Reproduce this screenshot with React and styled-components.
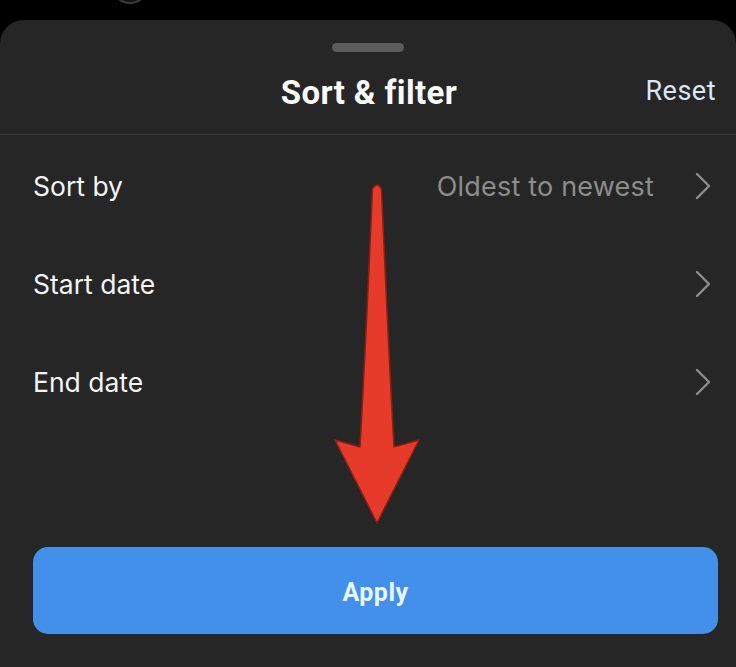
import React from "react";
import styled, { createGlobalStyle } from "styled-components";

const Global = createGlobalStyle`
  html, body { margin: 0; padding: 0; background: #000; }
  body { font-family: Inter, "Noto Sans", "Liberation Sans", sans-serif; -webkit-font-smoothing: antialiased; }
  * { box-sizing: border-box; }
`;

const Page = styled.div`
  width: 736px;
  height: 667px;
  background: #000;
  display: flex;
  flex-direction: column;
  overflow: hidden;
`;

const TopStrip = styled.div`
  height: 20px;
  flex: none;
  position: relative;
`;

const Dot = styled.div`
  position: absolute;
  left: 112px;
  top: -30px;
  width: 36px;
  height: 34px;
  border-radius: 50%;
  background: #111;
  border: 2px solid #3a3a3a;
`;

const Sheet = styled.div`
  flex: 1;
  background: #262626;
  border-radius: 24px 24px 0 0;
  display: flex;
  flex-direction: column;
  position: relative;
`;

const Handle = styled.div`
  width: 72px;
  height: 9px;
  border-radius: 5px;
  background: #5c5c5c;
  margin: 23px auto 0;
`;

const Header = styled.div`
  height: 83px;
  display: flex;
  align-items: center;
  justify-content: center;
  position: relative;
  border-bottom: 1.5px solid #3b3b3b;
`;

const Title = styled.h1`
  margin: 0 0 2px 2px;
  font-family: Roboto, Inter, sans-serif;
  font-size: 33px;
  font-weight: 700;
  color: #fafafa;
  letter-spacing: 0.4px;
`;

const Reset = styled.span`
  position: absolute;
  right: 20px;
  top: 23px;
  font-family: Roboto, Inter, sans-serif;
  font-size: 27px;
  color: #dbe6f2;
  font-weight: 400;
  letter-spacing: 0.5px;
`;

const List = styled.div`
  display: flex;
  flex-direction: column;
  padding-top: 2px;
`;

const Row = styled.div`
  height: 98px;
  display: flex;
  align-items: center;
  padding: 0 24px 0 33px;
`;

const Label = styled.span`
  font-size: 26.5px;
  color: #f4f4f4;
  flex: 1;
`;

const Value = styled.span`
  font-size: 27px;
  color: #8c8c8c;
  margin-right: 40px;
  letter-spacing: 0.2px;
`;

const Chevron = styled.svg`
  width: 18px;
  height: 28px;
  flex: none;
`;

const Spacer = styled.div`
  flex: 1;
`;

const ApplyButton = styled.button`
  margin: 0 18px 33px 33px;
  height: 87px;
  border: none;
  border-radius: 15px;
  background: #4290e9;
  color: #eaf6ff;
  font-family: Roboto, Inter, sans-serif;
  font-size: 25px;
  font-weight: 700;
  letter-spacing: 0.5px;
  padding-top: 4px;
`;

const Arrow = styled.svg`
  position: absolute;
  left: 330px;
  top: 160px;
  width: 94px;
  height: 350px;
  pointer-events: none;
`;

function ChevronIcon() {
  return (
    <Chevron viewBox="0 0 18 28">
      <path d="M3 2 L15 14 L3 26" fill="none" stroke="#8e8e8e" strokeWidth="2.4" strokeLinecap="round" strokeLinejoin="round" />
    </Chevron>
  );
}

export default function App() {
  const rows = [
    { label: "Sort by", value: "Oldest to newest" },
    { label: "Start date" },
    { label: "End date" },
  ];
  return (
    <Page>
      <Global />
      <TopStrip>
        <Dot />
      </TopStrip>
      <Sheet>
        <Handle />
        <Header>
          <Title>Sort &amp; filter</Title>
          <Reset>Reset</Reset>
        </Header>
        <List>
          {rows.map((r) => (
            <Row key={r.label}>
              <Label>{r.label}</Label>
              {r.value && <Value>{r.value}</Value>}
              <ChevronIcon />
            </Row>
          ))}
        </List>
        <Spacer />
        <ApplyButton>Apply</ApplyButton>
        <Arrow viewBox="0 0 94 350">
          <path
            d="M42.5 9 Q47 1 51.5 9 Q58 160 64 267 L89 260 L47 343 L5 260 L30 267 Q36 160 42.5 9 Z"
            fill="#e63a2a"
            stroke="#8a1f14"
            strokeWidth="1.5"
            strokeLinejoin="round"
          />
        </Arrow>
      </Sheet>
    </Page>
  );
}
